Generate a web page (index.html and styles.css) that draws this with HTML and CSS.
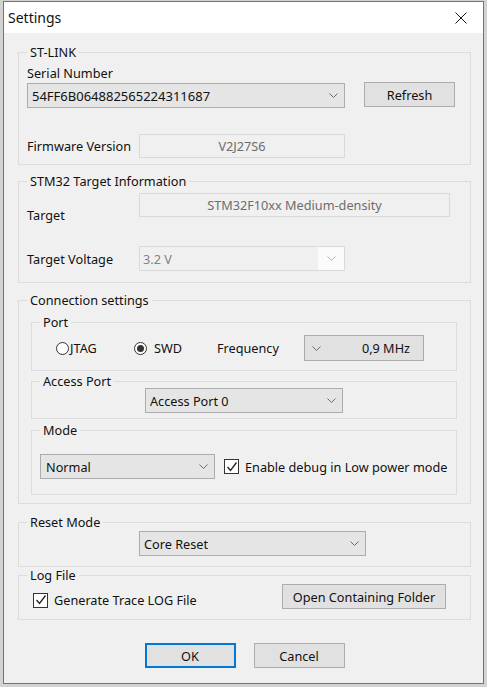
FILE: index.html
```html
<!DOCTYPE html>
<html>
<head>
<meta charset="utf-8">
<title>Settings</title>
<link rel="stylesheet" href="styles.css">
</head>
<body>
<div class="window">
  <div class="titlebar">
    <span class="title">Settings</span>
    <svg class="close" width="12" height="12" viewBox="0 0 12 12"><path d="M0.5 0.5 L11.5 11.5 M11.5 0.5 L0.5 11.5" stroke="#111" stroke-width="1" fill="none"/></svg>
  </div>
  <div class="client">
    <fieldset class="grp g-stlink">
      <legend>ST-LINK</legend>
      <div class="lbl">Serial Number</div>
      <div class="serial-row">
        <div class="combo combo-serial"><span class="digits">54FF6B064882565224311687</span><svg class="chev" width="9" height="5" viewBox="0 0 9 5"><path d="M0.5 0.5 L4.5 4.5 L8.5 0.5" fill="none" stroke="#6a6a6a"/></svg></div>
        <div class="btn btn-refresh">Refresh</div>
      </div>
      <div class="fw-row">
        <span class="flabel">Firmware Version</span>
        <div class="ro ro-fw">V2J27S6</div>
      </div>
    </fieldset>

    <fieldset class="grp g-stm32">
      <legend>STM32 Target Information</legend>
      <div class="t-row">
        <span class="flabel tlabel">Target</span>
        <div class="ro ro-target">STM32F10xx Medium-density</div>
      </div>
      <div class="v-row">
        <span class="flabel">Target Voltage</span>
        <div class="combo combo-volt"><span class="dtext">3.2 V</span><span class="volt-arrow"><svg class="chev" width="9" height="5" viewBox="0 0 9 5"><path d="M0.5 0.5 L4.5 4.5 L8.5 0.5" fill="none" stroke="#b5b5b5"/></svg></span></div>
      </div>
    </fieldset>

    <fieldset class="grp g-conn">
      <legend>Connection settings</legend>
      <fieldset class="sub g-port">
        <legend>Port</legend>
        <div class="port-row">
          <div class="radio r-jtag"><span class="rcirc"></span><span class="rtext t-jtag">JTAG</span></div>
          <div class="radio r-swd"><span class="rcirc on"></span><span class="rtext t-swd">SWD</span></div>
          <span class="freq-lbl">Frequency</span>
          <div class="combo combo-freq"><svg class="chev" width="9" height="5" viewBox="0 0 9 5"><path d="M0.5 0.5 L4.5 4.5 L8.5 0.5" fill="none" stroke="#6a6a6a"/></svg><span>0,9 MHz</span></div>
        </div>
      </fieldset>
      <fieldset class="sub g-ap">
        <legend>Access Port</legend>
        <div class="combo combo-ap"><span>Access Port 0</span><svg class="chev" width="9" height="5" viewBox="0 0 9 5"><path d="M0.5 0.5 L4.5 4.5 L8.5 0.5" fill="none" stroke="#6a6a6a"/></svg></div>
      </fieldset>
      <fieldset class="sub g-mode">
        <legend>Mode</legend>
        <div class="mode-row">
          <div class="combo combo-mode"><span>Normal</span><svg class="chev" width="9" height="5" viewBox="0 0 9 5"><path d="M0.5 0.5 L4.5 4.5 L8.5 0.5" fill="none" stroke="#6a6a6a"/></svg></div>
          <span class="cbox"><svg width="12" height="12" viewBox="0 0 12 12"><path d="M1.5 6 L4.5 9.5 L10.5 1.5" fill="none" stroke="#222" stroke-width="1.3"/></svg></span>
          <span class="cb-text">Enable debug in Low power mode</span>
        </div>
      </fieldset>
    </fieldset>

    <fieldset class="grp g-reset">
      <legend>Reset Mode</legend>
      <div class="combo combo-reset"><span>Core Reset</span><svg class="chev" width="9" height="5" viewBox="0 0 9 5"><path d="M0.5 0.5 L4.5 4.5 L8.5 0.5" fill="none" stroke="#6a6a6a"/></svg></div>
    </fieldset>

    <fieldset class="grp g-log">
      <legend>Log File</legend>
      <div class="log-row">
        <div class="log-check">
          <span class="cbox"><svg width="12" height="12" viewBox="0 0 12 12"><path d="M1.5 6 L4.5 9.5 L10.5 1.5" fill="none" stroke="#222" stroke-width="1.3"/></svg></span>
          <span class="cb-text">Generate Trace LOG File</span>
        </div>
        <div class="btn btn-folder">Open Containing Folder</div>
      </div>
    </fieldset>

    <div class="buttons">
      <div class="btn btn-ok">OK</div>
      <div class="btn btn-cancel">Cancel</div>
    </div>
  </div>
</div>
</body>
</html>
```

FILE: styles.css
```css
* { box-sizing: border-box; }
html, body { margin: 0; }
body {
  width: 487px;
  height: 687px;
  overflow: hidden;
  background: #d3d3d3;
  padding: 1px 0 0 3px;
  font-family: "Noto Sans", "Open Sans", sans-serif;
  font-size: 12.7px;
  line-height: 16px;
  color: #111;
}
.window {
  width: 481px;
  height: 683px;
  border: 1px solid #2b84d6;
  background: #f0f0f0;
  display: flex;
  flex-direction: column;
}
.titlebar {
  flex: none;
  height: 31px;
  background: #fff;
  display: flex;
  align-items: center;
  justify-content: space-between;
  padding: 0 16px 0 4px;
}
.title { font-size: 14px; }
.close { display: block; }
.client {
  display: flex;
  flex-direction: column;
  padding: 11px 12px 0 14px;
}
fieldset {
  margin: 0;
  border: 1px solid #dcdcdc;
  min-width: 0;
}
legend {
  padding: 0 3px;
  line-height: 16px;
}
.grp { padding: 5px 8px 6px 8px; }

/* combo boxes */
.combo {
  display: flex;
  align-items: center;
  justify-content: space-between;
  height: 25px;
  background: #e5e5e5;
  border: 1px solid #acacac;
  padding: 0 6px 0 4px;
  white-space: nowrap;
}
.digits { font-size: 13px; }
.chev { display: block; flex: none; }
.btn {
  display: flex;
  align-items: center;
  justify-content: center;
  height: 25px;
  background: #e1e1e1;
  border: 1px solid #adadad;
  white-space: nowrap;
}
.ro {
  height: 24px;
  border: 1px solid #d9d9d9;
  background: #f0f0f0;
  color: #6d6d6d;
  display: flex;
  align-items: center;
  justify-content: center;
}
.flabel { width: 112px; flex: none; }

/* ST-LINK */
.serial-row { display: flex; margin-top: 2px; }
.combo-serial { width: 318px; }
.btn-refresh { width: 91px; margin-left: 19px; margin-top: -1px; }
.fw-row { display: flex; align-items: center; margin-top: 26px; }
.ro-fw { width: 206px; }

/* STM32 */
.g-stm32 { margin-top: 8px; padding: 4px 8px 11px 8px; }
.t-row { display: flex; align-items: flex-start; }
.tlabel { margin-top: 14px; }
.ro-target { width: 311px; }
.v-row { display: flex; align-items: center; margin-top: 23px; }
.combo-volt {
  width: 206px;
  background: #f0f0f0;
  border-color: #d9d9d9;
  padding: 0;
}
.dtext { color: #838383; padding-left: 3px; }
.volt-arrow {
  width: 26px;
  height: 23px;
  background: #fbfbfb;
  display: flex;
  align-items: center;
  justify-content: center;
}

/* Connection */
.g-conn { margin-top: 9px; padding: 6px 8px 8px 8px; }
.sub { margin: 0 5px 0 4px; }
.g-port { padding: 5px 8px 9px 8px; }
.port-row { display: flex; align-items: center; height: 26px; }
.radio { display: flex; align-items: center; flex: none; }
.r-jtag { width: 78px; margin-left: 16px; }
.r-swd { width: 83px; }
.rcirc {
  width: 13px;
  height: 13px;
  border: 1px solid #333;
  border-radius: 50%;
  background: #fff;
  display: flex;
  align-items: center;
  justify-content: center;
  flex: none;
}
.rcirc.on::after {
  content: "";
  width: 7px;
  height: 7px;
  border-radius: 50%;
  background: #333;
}
.t-jtag { margin-left: 1px; }
.t-swd { margin-left: 7px; }
.freq-lbl { width: 87px; flex: none; }
.combo-freq {
  width: 120px;
  height: 26px;
  background: #e1e1e1;
  padding: 0 13px 0 7px;
}
.g-ap { margin-top: 2px; padding: 0 8px 5px 8px; }
.combo-ap { width: 198px; margin-left: 105px; margin-top: -1px; }
.g-mode { margin-top: 3px; padding: 16px 8px 15px 8px; }
.mode-row { display: flex; align-items: center; }
.combo-mode { width: 175px; padding-left: 5px; }
.cbox {
  width: 15px;
  height: 15px;
  border: 1px solid #333;
  background: #fff;
  display: flex;
  align-items: center;
  justify-content: center;
  flex: none;
}
.cbox svg { display: block; }
.mode-row .cbox { margin-left: 9px; }
.cb-text { margin-left: 6px; white-space: nowrap; }

/* Reset */
.g-reset { margin-top: 10px; padding: 1px 8px 10px 8px; }
.combo-reset { width: 227px; margin-left: 112px; }

/* Log */
.g-log { padding: 1px 8px 10px 8px; }
.log-row { display: flex; height: 25px; }
.log-check { display: flex; align-items: center; align-self: flex-end; margin-bottom: 1px; margin-left: 6px; }
.log-check .cb-text { margin-left: 6px; }
.btn-folder { width: 164px; margin-left: auto; margin-right: 16px; }

/* Buttons */
.buttons {
  display: flex;
  justify-content: center;
  gap: 18px;
  margin-top: 23px;
}
.btn-ok { width: 91px; border: 2px solid #0078d7; }
.btn-cancel { width: 91px; }
```
